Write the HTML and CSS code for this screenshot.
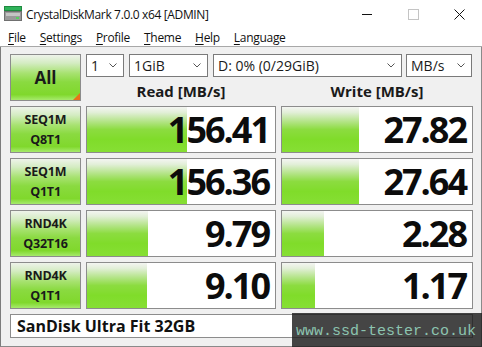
FILE: index.html
```html
<!DOCTYPE html>
<html>
<head>
<meta charset="utf-8">
<link rel="stylesheet" href="styles.css">
</head>
<body>
<div class="window">
  <div class="titlebar">
    <svg class="app-icon" width="18" height="15" viewBox="0 0 18 15">
      <rect x="0.5" y="0.5" width="17" height="4" fill="#2fb35a" stroke="#1f8a40"/>
      <rect x="0.5" y="5.5" width="17" height="9" fill="#9a9a9a" stroke="#707070"/>
      <rect x="2" y="7" width="14" height="3" fill="#c4c4c4"/>
      <rect x="12" y="11" width="3" height="2" fill="#58d060"/>
    </svg>
    <span class="title">CrystalDiskMark 7.0.0 x64 [ADMIN]</span>
    <div class="controls">
      <span class="ctl"><svg width="11" height="11" viewBox="0 0 11 11"><line x1="0" y1="5.5" x2="10" y2="5.5" stroke="#111" stroke-width="1"/></svg></span>
      <span class="ctl"><svg width="11" height="11" viewBox="0 0 11 11"><rect x="0.5" y="0.5" width="10" height="10" fill="none" stroke="#c4c4c4" stroke-width="1"/></svg></span>
      <span class="ctl"><svg width="11" height="11" viewBox="0 0 11 11"><path d="M0.5 0.5 L10.5 10.5 M10.5 0.5 L0.5 10.5" stroke="#111" stroke-width="1"/></svg></span>
    </div>
  </div>
  <div class="menubar">
    <span class="menu"><u>F</u>ile</span>
    <span class="menu"><u>S</u>ettings</span>
    <span class="menu"><u>P</u>rofile</span>
    <span class="menu"><u>T</u>heme</span>
    <span class="menu"><u>H</u>elp</span>
    <span class="menu"><u>L</u>anguage</span>
  </div>
  <div class="main">
    <div class="grid">
      <div class="btn all">All<span class="corner"></span></div>
      <div class="top">
        <div class="combos">
          <div class="combo c1"><span>1</span><svg class="chev" width="8" height="5" viewBox="0 0 8 5"><polyline points="0.5,0.5 4,4 7.5,0.5" fill="none" stroke="#555" stroke-width="1"/></svg></div>
          <div class="combo c2"><span>1GiB</span><svg class="chev" width="8" height="5" viewBox="0 0 8 5"><polyline points="0.5,0.5 4,4 7.5,0.5" fill="none" stroke="#555" stroke-width="1"/></svg></div>
          <div class="combo c3"><span>D: 0% (0/29GiB)</span><svg class="chev" width="8" height="5" viewBox="0 0 8 5"><polyline points="0.5,0.5 4,4 7.5,0.5" fill="none" stroke="#555" stroke-width="1"/></svg></div>
          <div class="combo c4"><span>MB/s</span><svg class="chev" width="8" height="5" viewBox="0 0 8 5"><polyline points="0.5,0.5 4,4 7.5,0.5" fill="none" stroke="#555" stroke-width="1"/></svg></div>
        </div>
        <div class="heads">
          <div class="head">Read [MB/s]</div>
          <div class="head">Write [MB/s]</div>
        </div>
      </div>

      <div class="btn label">SEQ1M<br>Q8T1</div>
      <div class="cell"><div class="bar" style="width:100px"></div><span class="num">156.41</span></div>
      <div class="cell"><div class="bar" style="width:77px"></div><span class="num">27.82</span></div>

      <div class="btn label">SEQ1M<br>Q1T1</div>
      <div class="cell"><div class="bar" style="width:100px"></div><span class="num">156.36</span></div>
      <div class="cell"><div class="bar" style="width:77px"></div><span class="num">27.64</span></div>

      <div class="btn label">RND4K<br>Q32T16</div>
      <div class="cell"><div class="bar" style="width:61px"></div><span class="num">9.79</span></div>
      <div class="cell"><div class="bar" style="width:42px"></div><span class="num">2.28</span></div>

      <div class="btn label">RND4K<br>Q1T1</div>
      <div class="cell"><div class="bar" style="width:60px"></div><span class="num">9.10</span></div>
      <div class="cell"><div class="bar" style="width:33px"></div><span class="num">1.17</span></div>

      <div class="name">SanDisk Ultra Fit 32GB</div>
    </div>
    <div class="watermark">www.ssd-tester.co.uk</div>
  </div>
</div>
</body>
</html>
```
FILE: styles.css
```css
* { box-sizing: border-box; }
html, body { margin: 0; padding: 0; }
body {
  width: 482px;
  height: 347px;
  overflow: hidden;
  font-family: "Open Sans", "Noto Sans", sans-serif;
  color: #111;
  background: #fff;
}
.window {
  width: 482px;
  height: 347px;
  display: flex;
  flex-direction: column;
}
.titlebar {
  height: 28px;
  display: flex;
  align-items: center;
  background: #fff;
  position: relative;
}
.app-icon { margin-left: 4px; margin-top: -2px; }
.title {
  margin-left: 4px;
  font-size: 12px;
  letter-spacing: -0.35px;
  color: #111;
}
.controls {
  margin-left: auto;
  display: flex;
  height: 28px;
  align-items: center;
}
.ctl {
  width: 46px;
  display: flex;
  justify-content: center;
  align-items: center;
}
.menubar {
  height: 19px;
  display: flex;
  align-items: center;
  font-size: 12px;
  letter-spacing: -0.3px;
  border-bottom: 1px solid #a8a8a8;
  padding-left: 8px;
  gap: 14px;
}
.menu u { text-decoration-thickness: 1px; text-underline-offset: 2px; }
.main {
  flex: 1;
  position: relative;
  background: #f0f0f0;
  border-left: 1px solid #7c7c7c;
  border-right: 1px solid #8a8a8a;
  border-bottom: 1px solid #8a8a8a;
  padding: 7px 0 0 9px;
}
.main::after {
  content: "";
  position: absolute;
  right: -2px;
  top: -20px;
  bottom: -2px;
  width: 1px;
  background: #6fcf3a;
}
.grid {
  display: grid;
  grid-template-columns: 71px 190px 192px;
  grid-template-rows: 47px 47px 47px 47px 47px 24px;
  column-gap: 5px;
  row-gap: 5px;
}
.btn {
  border: 1px solid #8c8c8c;
  background: linear-gradient(to bottom, #eef3ea 0%, #d4ecc2 18%, #a8e272 40%, #8ada40 60%, #80d82c 88%, #a6ea6c 100%);
  display: flex;
  align-items: center;
  justify-content: center;
  text-align: center;
  font-weight: 700;
  color: #1a1a1a;
  position: relative;
}
.all { font-size: 17px; }
.corner {
  position: absolute;
  right: 0;
  bottom: 0;
  width: 0;
  height: 0;
  border-left: 7px solid transparent;
  border-bottom: 7px solid #e8731a;
}
.label {
  font-size: 12.5px;
  line-height: 20px;
  letter-spacing: -0.2px;
}
.top {
  grid-column: 2 / 4;
  display: flex;
  flex-direction: column;
}
.combos {
  display: flex;
  height: 25px;
  gap: 5px;
}
.combo {
  background: #fff;
  border: 1px solid #7a7a7a;
  display: flex;
  align-items: center;
  padding: 0 6px 0 4px;
  font-size: 14px;
  color: #1a1a1a;
}
.combo span { flex: 1; white-space: nowrap; }
.c1 { width: 38px; }
.c2 { width: 79px; }
.c3 { width: 189px; }
.c4 { width: 66px; margin-left: -1px; }
.chev { flex: none; }
.heads {
  flex: 1;
  display: grid;
  grid-template-columns: 190px 192px;
  column-gap: 5px;
  align-items: center;
}
.head {
  text-align: center;
  font-weight: 700;
  font-size: 15px;
  padding-top: 4px;
  color: #1a1a1a;
}
.cell {
  border: 1px solid #8c8c8c;
  background: #fff;
  position: relative;
  display: flex;
  align-items: flex-start;
  justify-content: flex-end;
  padding-right: 6px;
  overflow: hidden;
}
.bar {
  position: absolute;
  left: 0;
  top: 0;
  bottom: 0;
  background: linear-gradient(to bottom, #f4f5f2 0%, #e2efd8 12%, #b4e488 32%, #8cdc40 50%, #80dc2a 72%, #86df34 100%);
}
.num {
  position: relative;
  font-weight: 700;
  font-size: 36px;
  letter-spacing: -2px;
  line-height: 42px;
  padding-top: 2px;
  color: #0c0c0c;
}
.name {
  grid-column: 1 / 4;
  border: 1px solid #8c8c8c;
  background: #fff;
  font-weight: 700;
  font-size: 16px;
  display: flex;
  align-items: center;
  padding-left: 6px;
  color: #111;
}
.watermark {
  position: absolute;
  right: -1px;
  bottom: -1px;
  width: 190px;
  height: 34px;
  background: rgba(28, 28, 28, 0.82);
  color: #8cc4b0;
  font-family: "Liberation Mono", "DejaVu Sans Mono", monospace;
  font-size: 15px;
  display: flex;
  align-items: center;
  padding-left: 4px;
  padding-top: 2px;
  white-space: nowrap;
}
```
